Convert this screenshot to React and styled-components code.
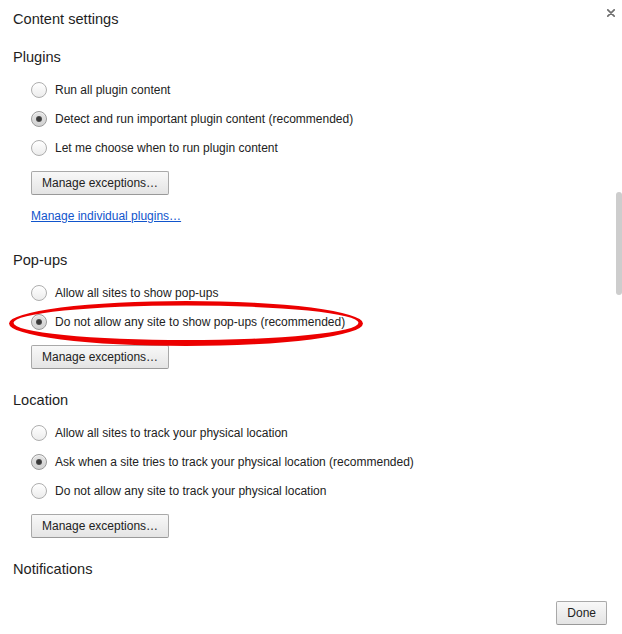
import React from "react";
import styled, { createGlobalStyle } from "styled-components";

const GlobalStyle = createGlobalStyle`
  html, body { margin: 0; padding: 0; background: #ffffff; }
  * { box-sizing: border-box; }
`;

const Dialog = styled.div`
  position: relative;
  width: 622px;
  height: 634px;
  overflow: hidden;
  display: flex;
  flex-direction: column;
  background: #ffffff;
  font-family: "Liberation Sans", Arial, Helvetica, sans-serif;
  color: #222;
`;

const Header = styled.div`
  display: flex;
  justify-content: space-between;
  align-items: flex-start;
  padding: 11px 4px 0 13px;
`;

const Title = styled.h1`
  margin: 0;
  font-size: 14.6px;
  font-weight: normal;
  line-height: 17px;
  color: #1e1e1e;
`;

const CloseButton = styled.button`
  width: 14px;
  height: 14px;
  margin-top: -5px;
  padding: 0;
  border: 0;
  background: transparent;
  display: flex;
  align-items: center;
  justify-content: center;
`;

const Content = styled.div`
  flex: 1;
  min-height: 0;
  overflow: hidden;
  padding-left: 13px;
`;

const Section = styled.section`
  display: flex;
  flex-direction: column;
  align-items: flex-start;
  margin-top: ${(p) => (p.$first ? "20px" : "22.5px")};
`;

const SectionHeading = styled.h3`
  margin: 0;
  font-size: 14.6px;
  font-weight: normal;
  line-height: 18px;
  color: #1e1e1e;
`;

const OptionList = styled.div`
  display: flex;
  flex-direction: column;
  margin-top: 9.5px;
  padding-left: 18px;
`;

const OptionRow = styled.label`
  position: relative;
  display: flex;
  align-items: center;
  height: 29px;
  font-size: 12px;
  line-height: 14px;
  color: #222;
  white-space: nowrap;
`;

const Radio = styled.span`
  position: relative;
  flex: none;
  width: 16px;
  height: 16px;
  margin-right: 8px;
  border-radius: 50%;
  border: 1px solid ${(p) => (p.$checked ? "#9a9a9a" : "#aeaeae")};
  background: ${(p) =>
    p.$checked
      ? "linear-gradient(#e4e4e4, #d2d2d2)"
      : "linear-gradient(#ffffff, #ececec)"};
  box-shadow: inset 0 1px 0 rgba(255, 255, 255, 0.6);

  &::after {
    content: "";
    display: ${(p) => (p.$checked ? "block" : "none")};
    position: absolute;
    left: 4px;
    top: 4px;
    width: 6px;
    height: 6px;
    border-radius: 50%;
    background: radial-gradient(circle, #3a3a3a 40%, #6a6a6a 100%);
  }
`;

const Highlight = styled.svg`
  position: absolute;
  left: -22px;
  top: -6.5px;
  width: 354px;
  height: 45px;
  pointer-events: none;
  overflow: visible;
`;

const Button = styled.button`
  height: 24px;
  padding: 0 10px;
  border: 1px solid #a9a9a9;
  border-bottom-color: #999;
  border-radius: 2px;
  background: linear-gradient(#f8f8f8, #e4e4e4);
  font-family: "Liberation Sans", Arial, Helvetica, sans-serif;
  font-size: 12px;
  color: #222;
  line-height: 20px;
  white-space: nowrap;
`;

const ManageButton = styled(Button)`
  margin-top: 8px;
  margin-left: 18px;
`;

const Link = styled.a`
  margin-top: 13px;
  margin-bottom: 5px;
  margin-left: 18px;
  font-size: 12px;
  line-height: 16px;
  color: #1155cc;
  text-decoration: underline;
  cursor: pointer;
`;

const Footer = styled.div`
  display: flex;
  justify-content: flex-end;
  padding: 0 15px 9px;
`;

const ScrollThumb = styled.div`
  position: absolute;
  right: 0;
  top: 192px;
  width: 6px;
  height: 103px;
  border-radius: 3px;
  background: #cdcdcd;
`;

const sections = [
  {
    title: "Plugins",
    options: [
      "Run all plugin content",
      "Detect and run important plugin content (recommended)",
      "Let me choose when to run plugin content",
    ],
    checked: 1,
    link: "Manage individual plugins…",
  },
  {
    title: "Pop-ups",
    options: [
      "Allow all sites to show pop-ups",
      "Do not allow any site to show pop-ups (recommended)",
    ],
    checked: 1,
    highlight: 1,
  },
  {
    title: "Location",
    options: [
      "Allow all sites to track your physical location",
      "Ask when a site tries to track your physical location (recommended)",
      "Do not allow any site to track your physical location",
    ],
    checked: 1,
  },
];

function Ellipse() {
  const d =
    "M 0 22.5 A 177 22.5 0 1 0 354 22.5 A 177 22.5 0 1 0 0 22.5 Z " +
    "M 4.5 21.8 A 172.5 17.3 0 1 0 349.5 21.8 A 172.5 17.3 0 1 0 4.5 21.8 Z";
  return (
    <Highlight viewBox="0 0 354 45">
      <path d={d} fill="#ec0000" fillRule="evenodd" />
    </Highlight>
  );
}

export default function App() {
  return (
    <>
      <GlobalStyle />
      <Dialog>
        <Header>
          <Title>Content settings</Title>
          <CloseButton aria-label="Close">
            <svg width="8" height="8" viewBox="0 0 8 8">
              <path
                d="M0.8 0.8 L7.2 7.2 M7.2 0.8 L0.8 7.2"
                stroke="#6f6f6f"
                strokeWidth="1.7"
                strokeLinecap="round"
              />
            </svg>
          </CloseButton>
        </Header>
        <Content>
          {sections.map((s, si) => (
            <Section key={s.title} $first={si === 0}>
              <SectionHeading>{s.title}</SectionHeading>
              <OptionList>
                {s.options.map((o, i) => (
                  <OptionRow key={o}>
                    <Radio $checked={i === s.checked} />
                    {o}
                    {s.highlight === i && <Ellipse />}
                  </OptionRow>
                ))}
              </OptionList>
              <ManageButton>Manage exceptions…</ManageButton>
              {s.link && <Link>{s.link}</Link>}
            </Section>
          ))}
          <Section>
            <SectionHeading>Notifications</SectionHeading>
          </Section>
        </Content>
        <Footer>
          <Button>Done</Button>
        </Footer>
        <ScrollThumb />
      </Dialog>
    </>
  );
}
